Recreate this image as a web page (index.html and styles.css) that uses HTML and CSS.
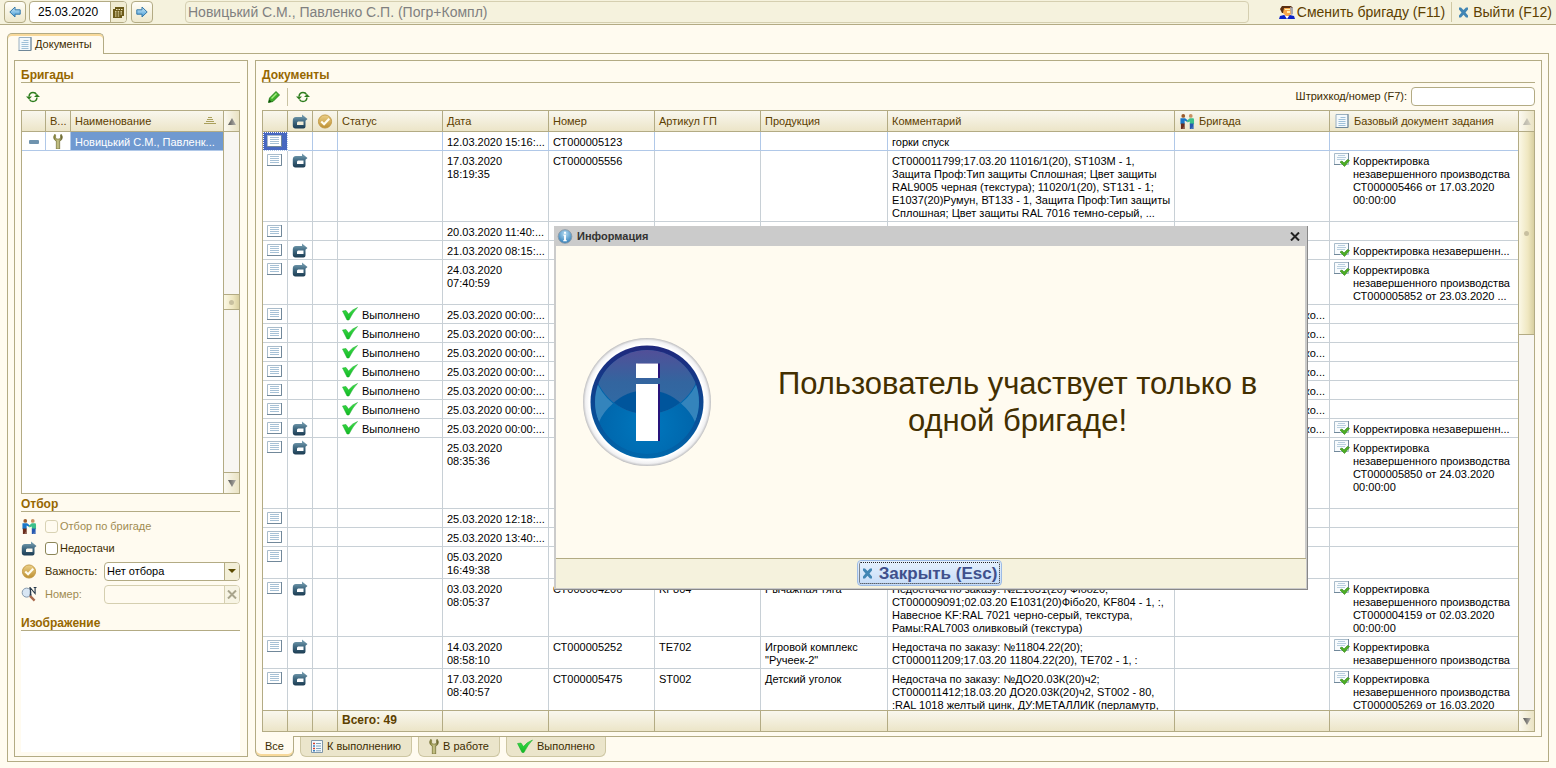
FILE: index.html
```html
<!DOCTYPE html>
<html lang="ru">
<head>
<meta charset="utf-8">
<title>Документы</title>
<link rel="stylesheet" href="styles.css">
</head>
<body>
<svg class="defs" aria-hidden="true">
  <defs>
    <linearGradient id="g-arrow" x1="0" y1="0" x2="0" y2="1"><stop offset="0" stop-color="#7fa6b8"/><stop offset=".5" stop-color="#416a82"/><stop offset="1" stop-color="#1c3c52"/></linearGradient>
    <linearGradient id="g-nav" x1="0" y1="0" x2="0" y2="1"><stop offset="0" stop-color="#d5eefa"/><stop offset="1" stop-color="#3f98d4"/></linearGradient>
    <linearGradient id="g-gold" x1="0" y1="0" x2="0" y2="1"><stop offset="0" stop-color="#ecd088"/><stop offset="1" stop-color="#bd8f30"/></linearGradient>
    <linearGradient id="g-green" x1="0" y1="0" x2="0" y2="1"><stop offset="0" stop-color="#3fe04a"/><stop offset="1" stop-color="#12b824"/></linearGradient>
    <linearGradient id="g-wrench" x1="0" y1="0" x2="1" y2="0"><stop offset="0" stop-color="#7c7a2c"/><stop offset=".5" stop-color="#c9c68a"/><stop offset="1" stop-color="#5b5820"/></linearGradient>
    <linearGradient id="g-tri" x1="0" y1="0" x2="1" y2="0"><stop offset="0" stop-color="#5a5a58"/><stop offset="1" stop-color="#b4b2ac"/></linearGradient>
    <radialGradient id="g-ball" cx=".5" cy=".3" r=".7"><stop offset="0" stop-color="#b6dcf2"/><stop offset="1" stop-color="#2f7db8"/></radialGradient>
    <linearGradient id="g-ring" x1="0" y1="0" x2="0" y2="1"><stop offset="0" stop-color="#20287c"/><stop offset=".5" stop-color="#0c4590"/><stop offset="1" stop-color="#0068ac"/></linearGradient>
    <radialGradient id="g-face" cx=".5" cy=".72" r=".6"><stop offset="0" stop-color="#0078be"/><stop offset="1" stop-color="#0060a6"/></radialGradient>
    <linearGradient id="g-gloss" gradientUnits="userSpaceOnUse" x1="0" y1="12" x2="0" y2="76"><stop offset="0" stop-color="#524f98"/><stop offset=".5" stop-color="#33659f"/><stop offset="1" stop-color="#2f6ca6"/></linearGradient>
    <radialGradient id="g-rim" cx=".5" cy=".5" r=".5"><stop offset=".9" stop-color="#fff"/><stop offset=".96" stop-color="#f0f0f2"/><stop offset="1" stop-color="#bebec0"/></radialGradient>
    <clipPath id="c-face"><circle cx="64" cy="64" r="52"/></clipPath>
    <clipPath id="c-top"><circle cx="64" cy="22" r="54"/></clipPath>
  </defs>
  <symbol id="i-doc" viewBox="0 0 15 12"><path d="M.5 .5h14v11H.5z" fill="#fff" stroke="#a9bccb"/><path d="M14.500 0v11.500H0" fill="none" stroke="#71889a"/><path d="M3 2.500h9M3 4.500h9M3 6.500h9M3 8.500h9" stroke="#a6c1d6"/></symbol>
  <symbol id="i-page" viewBox="0 0 13 14"><path d="M.5 .5h12v13H.5z" fill="#f4f9fc" stroke="#9ab0c0"/><path d="M12.500 0v13.500H0" fill="none" stroke="#6f8798"/><path d="M5 3.500h5M3 5.500h7M3 7.500h7M3 9.500h7M3 11.500h7" stroke="#9fc0d8"/></symbol>
  <symbol id="i-back" viewBox="0 0 16 15"><path fill-rule="evenodd" d="M10 .5L15.500 5 13.500 6.800V12.500Q13.500 14.500 11.500 14.500H3.500Q.8 14.500.8 11.500V6.500Q.8 3 4 3h6zM6 7.500h5.500v3.500H5V8.500z" fill="url(#g-arrow)"/></symbol>
  <symbol id="i-gold" viewBox="0 0 16 16"><circle cx="8" cy="8" r="7" fill="url(#g-gold)" stroke="#c29a45"/><path d="M4 8l3 3 5.500-6" fill="none" stroke="#fffdf0" stroke-width="2.300"/></symbol>
  <symbol id="i-check" viewBox="0 0 16 14"><path d="M.5 4l3.500-.5 2.500 3.500Q10 2.500 15.500 .5 11 5 7 13H5z" fill="url(#g-green)" stroke="#16a828" stroke-width=".5"/></symbol>
  <symbol id="i-wrench" viewBox="0 0 10 15"><path d="M1.500 .5Q0 3 1 5q.8 1.500 2.300 2v8h3.400V7Q8.500 6.400 9 5q1-2-.5-4.500L7.500 .8v3.400L6 5H4L2.600 4.200V.8z" fill="url(#g-wrench)" stroke="#6b682c" stroke-width=".6"/></symbol>
  <symbol id="i-refresh" viewBox="0 0 14 12"><path d="M3 5.500Q3.500 1.500 7 1.500q2.500 0 3.500 2M11 6.500q-.5 4-4 4-2.500 0-3.500-2" fill="none" stroke="#2e7d1e" stroke-width="1.500"/><path d="M0 5.500h6L3 8.500zM8 6h6l-3-3z" fill="#2e7d1e"/></symbol>
  <symbol id="i-pencil" viewBox="0 0 12 12"><path d="M.5 11.500l1-4.500L8 .5 11.500 4 5 10.500z" fill="#3fae2a" stroke="#1c7412" stroke-width=".8"/><path d="M.5 11.500l.8-3 2.300 2.200z" fill="#0f4f0a"/><path d="M3.500 7.500l5-5" stroke="#a6ee80" stroke-width="1.500"/></symbol>
  <symbol id="i-people" viewBox="0 0 16 16"><circle cx="4" cy="2" r="2" fill="#9a5a2c"/><circle cx="12" cy="2" r="2" fill="#c89060"/><path d="M1 4.500h5l3 2.500-.8 1.500L5.500 7v4H1z" fill="#1976c8"/><path d="M15 4.500h-4L8 7l.5 2L11 8v3h4.500V6z" fill="#3cc08a"/><path d="M1.500 10h4v6H4v-3l-.5 3h-2z" fill="#6a2c1c"/><path d="M11 10h4v6h-1.500v-3L13 16h-2z" fill="#2458b0"/></symbol>
  <symbol id="i-docok" viewBox="0 0 16 14"><path d="M.5 .5h14v11H.5z" fill="#f8fbfd" stroke="#a9bccb"/><path d="M14.500 0v7M0 11.500h6" stroke="#71889a"/><path d="M4 2.500h7M3 4.500h9M3 6.500h8" stroke="#b9cfdf"/><path d="M6 9l2-1 2 2 3.500-3.500 2 1L10.500 13.500z" fill="#4cae24" stroke="#2f8212" stroke-width=".6"/></symbol>
  <symbol id="i-x" viewBox="0 0 11 10"><path d="M1 0h2l2.500 2.600L8 0h2v2L7.500 5 10 8v2H8L5.500 7.300 3 10H1V8l2.500-3L1 2V0z" fill="#4286b4"/></symbol>
  <symbol id="i-nav" viewBox="0 0 12 12"><path d="M.8 6L6 1v2.800h5.200v4.400H6V11z" fill="url(#g-nav)" stroke="#3578a8"/></symbol>
  <symbol id="i-calc" viewBox="0 0 11 11"><path d="M2 0h9v9H9v2H0V2h2z" fill="#6b5a18"/><path d="M3 2h1.500v1H3zM5.500 2H7v1H5.500zM8 2h1.500v1H8zM2 4.200h1.500v1.200H2zM4.700 4.200h1.500v1.200H4.700zM7.500 4.200H9v1.200H7.500zM2 6.500h1.500v1H2zM4.700 6.500h1.500v1H4.700zM7.500 6.500H9v1H7.500zM2 8.600h1.500v1H2zM4.700 8.600h1.500v1H4.700z" fill="#f3e9bd"/></symbol>
  <symbol id="i-user" viewBox="0 0 16 13"><path d="M3 0h9l2 2v5H3L1 3z" fill="#5a2f10"/><path d="M5 2h7v6l-2 2H7L4 7z" fill="#f7a64a"/><path d="M6 3h5v1H6zM8 5h3v2H8z" fill="#fff0b0"/><path d="M11 1l3 1v6l-2 1z" fill="#a8a8b0"/><path d="M0 13l1-3 4-1 3 2 3-2 4 1 1 3z" fill="#0a22c8"/><path d="M6 10h4l-2 3z" fill="#fff"/></symbol>
  <symbol id="i-search" viewBox="0 0 16 16"><circle cx="5.500" cy="6" r="4.800" fill="#d8e6f4" stroke="#7f93a8"/><path d="M9 9.500l5 5" stroke="#a8694c" stroke-width="2.500"/><path d="M9.500 8V1l5 6V.5M8 1h2M13 .5h3M8.500 8.500h2.500" fill="none" stroke="#26384a" stroke-width="1.200"/></symbol>
  <symbol id="i-list" viewBox="0 0 12 13"><path d="M.5 .5h11v12H.5z" fill="#f4f9fc" stroke="#7f96a8"/><path d="M2 3.500h2M2 8.500h2" stroke="#d04030" stroke-width="1.500"/><path d="M2 6h2M2 10.800h2" stroke="#3a80c0" stroke-width="1.500"/><path d="M5 3.500h5M5 6h5M5 8.500h5M5 10.800h5" stroke="#7fa2bc"/></symbol>
  <symbol id="i-up" viewBox="0 0 8 7"><path d="M4 0l4 7H0z" fill="url(#g-tri)"/></symbol>
  <symbol id="i-down" viewBox="0 0 8 7"><path d="M4 7l4-7H0z" fill="url(#g-tri)"/></symbol>
  <symbol id="i-sort" viewBox="0 0 12 8"><path d="M4 .5h4M3 2.500h6M2 4.500h8M0 6.500h12" stroke="#aaa05c"/></symbol>
  <symbol id="i-close" viewBox="0 0 10 9"><path d="M1 .5l8 8M9 .5l-8 8" stroke="currentColor" stroke-width="2"/></symbol>
  <symbol id="i-info" viewBox="0 0 16 16"><circle cx="8" cy="8" r="7.300" fill="url(#g-ball)" stroke="#8b9aa8"/><path d="M7 3h2v2H7zM6 6h3v6h1v1H6v-1h1V7H6z" fill="#fff"/></symbol>
</svg>

<header class="topbar">
  <button class="nav-btn" type="button" aria-label="Назад"><svg class="s12"><use href="#i-nav"/></svg></button>
  <div class="date-box">
    <input type="text" value="25.03.2020" aria-label="Дата">
    <button type="button" aria-label="Календарь"><svg class="s11"><use href="#i-calc"/></svg></button>
  </div>
  <button class="nav-btn" type="button" aria-label="Вперед"><svg class="s12 flip"><use href="#i-nav"/></svg></button>
  <input class="team-input" type="text" value="Новицький С.М., Павленко С.П. (Погр+Компл)" aria-label="Бригада" disabled>
  <button class="link-btn" type="button"><svg class="s16"><use href="#i-user"/></svg>Сменить бригаду (F11)</button>
  <span class="sep"></span>
  <button class="link-btn exit" type="button"><svg class="s11"><use href="#i-x"/></svg>Выйти (F12)</button>
</header>

<main class="main">
  <div class="tabs"><button class="tab" type="button"><svg class="s14"><use href="#i-page"/></svg>Документы</button></div>
  <div class="workspace">
    <aside class="side">
      <h2>Бригады</h2>
      <div class="tools"><button class="tool" type="button" aria-label="Обновить"><svg class="s14"><use href="#i-refresh"/></svg></button></div>
      <div class="grid-box teams">
        <div class="scroll-area">
          <table>
            <colgroup><col class="c24"><col class="c25"><col></colgroup>
            <thead><tr><th></th><th>В...</th><th><span class="sorted">Наименование<svg class="s12"><use href="#i-sort"/></svg></span></th></tr></thead>
            <tbody><tr class="cur"><td class="ic"><span class="dash"></span></td><td class="ic"><svg class="s15"><use href="#i-wrench"/></svg></td><td class="picked">Новицький С.М., Павленк...</td></tr></tbody>
          </table>
        </div>
        <div class="scrollbar"><span class="sb-btn"><svg class="s8"><use href="#i-up"/></svg></span><span class="track"></span><span class="thumb small"></span><span class="track"></span><span class="sb-btn"><svg class="s8"><use href="#i-down"/></svg></span></div>
      </div>
      <h2 class="h-filter">Отбор</h2>
      <div class="filters">
        <svg class="s16"><use href="#i-people"/></svg><label class="check off"><input type="checkbox" disabled>Отбор по бригаде</label>
        <svg class="s16"><use href="#i-back"/></svg><label class="check"><input type="checkbox">Недостачи</label>
        <svg class="s16"><use href="#i-gold"/></svg><label for="imp">Важность:</label>
        <div class="field"><select id="imp"><option>Нет отбора</option></select><span class="drop"></span></div>
        <svg class="s16"><use href="#i-search"/></svg><label class="off" for="num">Номер:</label>
        <div class="field off"><input id="num" type="text" disabled><button type="button" aria-label="Очистить" disabled><svg class="s10"><use href="#i-close"/></svg></button></div>
      </div>
      <h2 class="h-image">Изображение</h2>
      <div class="image-box"></div>
    </aside>

    <section class="docs-col">
      <div class="docs">
        <h2>Документы</h2>
        <div class="tools">
          <button class="tool" type="button" aria-label="Изменить"><svg class="s12"><use href="#i-pencil"/></svg></button>
          <span class="tool-sep"></span>
          <button class="tool" type="button" aria-label="Обновить"><svg class="s14"><use href="#i-refresh"/></svg></button>
          <label class="barcode">Штрихкод/номер (F7):<input type="text"></label>
        </div>
        <div class="grid-box list">
          <div class="scroll-area">
            <table>
              <colgroup><col class="c25"><col class="c25"><col class="c25"><col class="c105"><col class="c106"><col class="c106"><col class="c106"><col class="c127"><col><col class="c155"><col class="c188"></colgroup>
              <thead><tr><th></th><th class="ic"><svg class="s16"><use href="#i-back"/></svg></th><th class="ic"><svg class="s16"><use href="#i-gold"/></svg></th><th>Статус</th><th>Дата</th><th>Номер</th><th>Артикул ГП</th><th>Продукция</th><th>Комментарий</th><th><span class="icl"><svg class="s16"><use href="#i-people"/></svg>Бригада</span></th><th><span class="icl page"><svg class="s14"><use href="#i-page"/></svg>Базовый документ задания</span></th></tr></thead>
              <tbody>
                <tr class="cur"><td class="ic focus"><svg class="doc"><use href="#i-doc"/></svg></td><td></td><td></td><td></td><td>12.03.2020 15:16:...</td><td>СТ000005123</td><td></td><td></td><td>горки спуск</td><td></td><td></td></tr>
                <tr><td class="ic"><svg class="doc"><use href="#i-doc"/></svg></td><td class="ic"><svg class="s16"><use href="#i-back"/></svg></td><td></td><td></td><td>17.03.2020<br>18:19:35</td><td>СТ000005556</td><td></td><td></td><td>СТ000011799;17.03.20 11016/1(20), ST103M - 1,<br>Защита Проф:Тип защиты Сплошная; Цвет защиты<br>RAL9005 черная (текстура); 11020/1(20), ST131 - 1;<br>Е1037(20)Румун, ВТ133 - 1, Защита Проф:Тип защиты<br>Сплошная; Цвет защиты RAL 7016 темно-серый, ...</td><td></td><td><div class="base"><svg class="s16"><use href="#i-docok"/></svg><span>Корректировка<br>незавершенного производства<br>СТ000005466 от 17.03.2020<br>00:00:00</span></div></td></tr>
                <tr><td class="ic"><svg class="doc"><use href="#i-doc"/></svg></td><td></td><td></td><td></td><td>20.03.2020 11:40:...</td><td></td><td></td><td></td><td></td><td></td><td></td></tr>
                <tr><td class="ic"><svg class="doc"><use href="#i-doc"/></svg></td><td class="ic"><svg class="s16"><use href="#i-back"/></svg></td><td></td><td></td><td>21.03.2020 08:15:...</td><td></td><td></td><td></td><td></td><td></td><td><div class="base"><svg class="s16"><use href="#i-docok"/></svg><span>Корректировка незавершенн...</span></div></td></tr>
                <tr class="rows3"><td class="ic"><svg class="doc"><use href="#i-doc"/></svg></td><td class="ic"><svg class="s16"><use href="#i-back"/></svg></td><td></td><td></td><td>24.03.2020<br>07:40:59</td><td></td><td></td><td></td><td></td><td></td><td><div class="base"><svg class="s16"><use href="#i-docok"/></svg><span>Корректировка<br>незавершенного производства<br>СТ000005852 от 23.03.2020 ...</span></div></td></tr>
                <tr><td class="ic"><svg class="doc"><use href="#i-doc"/></svg></td><td></td><td></td><td><span class="done"><svg class="s16"><use href="#i-check"/></svg>Выполнено</span></td><td>25.03.2020 00:00:...</td><td></td><td></td><td></td><td></td><td class="team">Новицький С.М., Павленко...</td><td></td></tr>
                <tr><td class="ic"><svg class="doc"><use href="#i-doc"/></svg></td><td></td><td></td><td><span class="done"><svg class="s16"><use href="#i-check"/></svg>Выполнено</span></td><td>25.03.2020 00:00:...</td><td></td><td></td><td></td><td></td><td class="team">Новицький С.М., Павленко...</td><td></td></tr>
                <tr><td class="ic"><svg class="doc"><use href="#i-doc"/></svg></td><td></td><td></td><td><span class="done"><svg class="s16"><use href="#i-check"/></svg>Выполнено</span></td><td>25.03.2020 00:00:...</td><td></td><td></td><td></td><td></td><td class="team">Новицький С.М., Павленко...</td><td></td></tr>
                <tr><td class="ic"><svg class="doc"><use href="#i-doc"/></svg></td><td></td><td></td><td><span class="done"><svg class="s16"><use href="#i-check"/></svg>Выполнено</span></td><td>25.03.2020 00:00:...</td><td></td><td></td><td></td><td></td><td class="team">Новицький С.М., Павленко...</td><td></td></tr>
                <tr><td class="ic"><svg class="doc"><use href="#i-doc"/></svg></td><td></td><td></td><td><span class="done"><svg class="s16"><use href="#i-check"/></svg>Выполнено</span></td><td>25.03.2020 00:00:...</td><td></td><td></td><td></td><td></td><td class="team">Новицький С.М., Павленко...</td><td></td></tr>
                <tr><td class="ic"><svg class="doc"><use href="#i-doc"/></svg></td><td></td><td></td><td><span class="done"><svg class="s16"><use href="#i-check"/></svg>Выполнено</span></td><td>25.03.2020 00:00:...</td><td></td><td></td><td></td><td></td><td class="team">Новицький С.М., Павленко...</td><td></td></tr>
                <tr><td class="ic"><svg class="doc"><use href="#i-doc"/></svg></td><td class="ic"><svg class="s16"><use href="#i-back"/></svg></td><td></td><td><span class="done"><svg class="s16"><use href="#i-check"/></svg>Выполнено</span></td><td>25.03.2020 00:00:...</td><td></td><td></td><td></td><td></td><td class="team">Новицький С.М., Павленко...</td><td><div class="base"><svg class="s16"><use href="#i-docok"/></svg><span>Корректировка незавершенн...</span></div></td></tr>
                <tr class="rows5"><td class="ic"><svg class="doc"><use href="#i-doc"/></svg></td><td class="ic"><svg class="s16"><use href="#i-back"/></svg></td><td></td><td></td><td>25.03.2020<br>08:35:36</td><td></td><td></td><td></td><td></td><td></td><td><div class="base"><svg class="s16"><use href="#i-docok"/></svg><span>Корректировка<br>незавершенного производства<br>СТ000005850 от 24.03.2020<br>00:00:00</span></div></td></tr>
                <tr><td class="ic"><svg class="doc"><use href="#i-doc"/></svg></td><td></td><td></td><td></td><td>25.03.2020 12:18:...</td><td></td><td></td><td></td><td></td><td></td><td></td></tr>
                <tr><td class="ic"><svg class="doc"><use href="#i-doc"/></svg></td><td></td><td></td><td></td><td>25.03.2020 13:40:...</td><td></td><td></td><td></td><td></td><td></td><td></td></tr>
                <tr><td class="ic"><svg class="doc"><use href="#i-doc"/></svg></td><td></td><td></td><td></td><td>05.03.2020<br>16:49:38</td><td></td><td></td><td></td><td></td><td></td><td></td></tr>
                <tr><td class="ic"><svg class="doc"><use href="#i-doc"/></svg></td><td class="ic"><svg class="s16"><use href="#i-back"/></svg></td><td></td><td></td><td>03.03.2020<br>08:05:37</td><td>СТ000004206</td><td>KF804</td><td>Рычажная тяга</td><td>Недостача по заказу: №Е1031(20) Фібо20;<br>СТ000009091;02.03.20 Е1031(20)Фібо20, KF804 - 1, :,<br>Навесное KF:RAL 7021 черно-серый, текстура,<br>Рамы:RAL7003 оливковый (текстура)</td><td></td><td><div class="base"><svg class="s16"><use href="#i-docok"/></svg><span>Корректировка<br>незавершенного производства<br>СТ000004159 от 02.03.2020<br>00:00:00</span></div></td></tr>
                <tr><td class="ic"><svg class="doc"><use href="#i-doc"/></svg></td><td class="ic"><svg class="s16"><use href="#i-back"/></svg></td><td></td><td></td><td>14.03.2020<br>08:58:10</td><td>СТ000005252</td><td>ТЕ702</td><td>Игровой комплекс<br>"Ручеек-2"</td><td>Недостача по заказу: №11804.22(20);<br>СТ000011209;17.03.20 11804.22(20), ТЕ702 - 1, :</td><td></td><td><div class="base"><svg class="s16"><use href="#i-docok"/></svg><span>Корректировка<br>незавершенного производства</span></div></td></tr>
                <tr><td class="ic"><svg class="doc"><use href="#i-doc"/></svg></td><td class="ic"><svg class="s16"><use href="#i-back"/></svg></td><td></td><td></td><td>17.03.2020<br>08:40:57</td><td>СТ000005475</td><td>ST002</td><td>Детский уголок</td><td>Недостача по заказу: №ДО20.03К(20)ч2;<br>СТ000011412;18.03.20 ДО20.03К(20)ч2, ST002 - 80,<br>:RAL 1018 желтый цинк, ДУ:МЕТАЛЛИК (перламутр,</td><td></td><td><div class="base"><svg class="s16"><use href="#i-docok"/></svg><span>Корректировка<br>незавершенного производства<br>СТ000005269 от 16.03.2020</span></div></td></tr>
              </tbody>
              <tfoot><tr><td></td><td></td><td></td><td>Всего: 49</td><td></td><td></td><td></td><td></td><td></td><td></td><td></td></tr></tfoot>
            </table>
          </div>
          <div class="scrollbar"><span class="sb-btn dim"><svg class="s8"><use href="#i-up"/></svg></span><span class="thumb"></span><span class="track long"></span><span class="sb-btn"><svg class="s8"><use href="#i-down"/></svg></span></div>
        </div>
      </div>
      <div class="bottom-tabs">
        <button class="btab active" type="button">Все</button>
        <button class="btab" type="button"><svg class="s13"><use href="#i-list"/></svg>К выполнению</button>
        <button class="btab" type="button"><svg class="s15"><use href="#i-wrench"/></svg>В работе</button>
        <button class="btab" type="button"><svg class="s16"><use href="#i-check"/></svg>Выполнено</button>
      </div>
    </section>
  </div>
</main>

<div class="dialog" role="dialog" aria-labelledby="dlg-title">
  <div class="dlg-head"><svg class="s16"><use href="#i-info"/></svg><span id="dlg-title">Информация</span><button type="button" aria-label="Закрыть окно"><svg class="s10"><use href="#i-close"/></svg></button></div>
  <div class="dlg-body">
    <svg class="big-info" viewBox="0 0 128 128" aria-hidden="true">
      <circle cx="64" cy="64" r="64" fill="url(#g-rim)"/>
      <circle cx="64" cy="64" r="56.500" fill="url(#g-ring)"/>
      <g clip-path="url(#c-face)">
        <circle cx="64" cy="64" r="52" fill="url(#g-face)"/>
        <path d="M12 40Q18 56 30 65.500 20 74 16 84L8 64zM116 40q-6 16-18 25.500Q108 74 112 84l8-20z" fill="#3484bc"/>
        <circle cx="64" cy="22" r="54" fill="url(#g-gloss)"/>
        <circle cx="64" cy="102" r="50" fill="#00559c" clip-path="url(#c-top)"/>
      </g>
      <path d="M55 25.500h22V40H55zM55 46h22v57H55z" fill="#28147a"/>
      <path d="M53 25.500h22V40H53zM53 46h22v57H53z" fill="#fff"/>
    </svg>
    <p>Пользователь участвует только в<br>одной бригаде!</p>
  </div>
  <div class="dlg-foot"><button type="button"><svg class="s11"><use href="#i-x"/></svg>Закрыть (Esc)</button></div>
</div>
</body>
</html>
```
FILE: styles.css
```css
:root {
  --paper: #fffbf0;
  --line: #b3ab84;
  --brown: #5c4000;
  --head: linear-gradient(#f9f7ee, #ece5c8);
}
* { box-sizing: border-box; }
body {
  margin: 0;
  height: 100vh;
  display: flex;
  flex-direction: column;
  background: var(--paper);
  color: #3c2c00;
  font: 11px/13px "Liberation Sans", Arial, sans-serif;
  overflow: hidden;
  position: relative;
}
button, input, select { font: inherit; color: inherit; margin: 0; padding: 0; border: 0; background: none; outline: 0; }
svg { display: block; flex: none; }
.defs { position: absolute; width: 0; height: 0; }
.s8 { width: 8px; height: 7px; }
.s10 { width: 10px; height: 9px; }
.s11 { width: 11px; height: 11px; }
.s12 { width: 12px; height: 12px; }
.s13 { width: 12px; height: 13px; }
.s14 { width: 14px; height: 14px; }
.s15 { width: 10px; height: 15px; }
.s16 { width: 16px; height: 15px; }
.doc { width: 15px; height: 12px; }
.flip { transform: scaleX(-1); }

/* top bar */
.topbar {
  flex: none;
  display: flex;
  align-items: center;
  height: 25px;
  padding: 0 4px;
  background: #f5f2dd;
  border-bottom: 1px solid var(--line);
  font-size: 14px;
}
.nav-btn {
  width: 22px;
  height: 22px;
  display: grid;
  place-items: center;
  border: 1px solid var(--line);
  border-radius: 4px;
  background: linear-gradient(#fffef8, #eee8cc);
}
.date-box {
  display: flex;
  width: 98px;
  height: 22px;
  margin: 0 4px 0 3px;
  border: 1px solid var(--line);
  border-radius: 4px;
  background: #fff;
  overflow: hidden;
}
.date-box input { flex: 1; min-width: 0; padding-left: 8px; font-size: 12px; color: #000; }
.date-box button { width: 16px; display: grid; place-items: center; border-left: 1px solid var(--line); background: #f1ecd2; }
.team-input {
  flex: 1;
  min-width: 0;
  height: 22px;
  margin: 0 30px 0 32px;
  padding: 0 2px;
  border: 1px solid #d5cfb0;
  border-radius: 4px;
  color: #808080;
}
.link-btn { display: flex; align-items: center; gap: 2px; white-space: nowrap; color: var(--brown); }
.exit { gap: 4px; }
.sep { width: 1px; height: 20px; margin: 0 6px; background: #cfc8a4; }

/* main frame */
.main { flex: 1; min-height: 0; display: flex; flex-direction: column; padding: 8px 7px 6px; }
.tabs { display: flex; z-index: 1; }
.tab {
  display: flex;
  align-items: center;
  gap: 3px;
  height: 21px;
  margin-bottom: -1px;
  padding: 0 11px 0 10px;
  border: 1px solid var(--line);
  border-bottom: 0;
  border-radius: 5px 5px 0 0;
  background: var(--paper);
  box-shadow: inset 0 2px #f8d99a;
}
.workspace { flex: 1; min-height: 0; display: flex; gap: 7px; padding: 6px 6px 4px; border: 1px solid var(--line); }
h2 {
  margin: 0;
  height: 15px;
  border-bottom: 1px solid var(--line);
  color: #966700;
  font-size: 12px;
  line-height: 14px;
  font-weight: bold;
}
.side { flex: none; width: 234px; display: flex; flex-direction: column; padding: 7px 7px 4px 6px; border: 1px solid var(--line); }
.docs-col { flex: 1; min-width: 0; display: flex; flex-direction: column; }
.docs { flex: 1; min-height: 0; display: flex; flex-direction: column; padding: 7px 6px 4px; border: 1px solid var(--line); }
.tools { display: flex; align-items: center; height: 27px; padding-left: 4px; }
.tool { width: 16px; height: 20px; display: grid; place-items: center; }
.tool-sep { width: 1px; height: 18px; margin: 0 7px 0 5px; background: #c9c3a4; }
.barcode { display: flex; align-items: center; gap: 4px; margin-left: auto; }
.barcode input { width: 124px; height: 19px; border: 1px solid var(--line); border-radius: 4px; background: #fff; }

/* grids */
.grid-box { display: flex; min-height: 0; border: 1px solid var(--line); background: #fff; }
.teams { flex: 1; }
.list { flex: 1; }
.scroll-area { flex: 1; min-width: 0; overflow: hidden; }
table { width: 100%; table-layout: fixed; border-collapse: separate; border-spacing: 0; color: #000; }
.c24 { width: 24px; }
.c25 { width: 25px; }
.c105 { width: 105px; }
.c106 { width: 106px; }
.c127 { width: 127px; }
.c155 { width: 155px; }
.c188 { width: 188px; }
th {
  position: sticky;
  top: 0;
  height: 21px;
  padding: 0 4px;
  text-align: left;
  font-weight: normal;
  color: var(--brown);
  background: var(--head);
  border-right: 1px solid var(--line);
  border-bottom: 1px solid var(--line);
  white-space: nowrap;
  overflow: hidden;
}
td {
  padding: 4px 1px 1px 4px;
  height: 19px;
  vertical-align: top;
  border-right: 1px solid #c8d0d6;
  border-bottom: 1px solid #c8d0d6;
  white-space: nowrap;
  overflow: hidden;
}
tr > :last-child { border-right: 0; }
.cur td { border-color: #b0c8e8; }
th.ic { padding: 1px 4px; }
td.ic { padding: 2px 4px 0; }
td.ic .doc { margin-top: 1px; }
th.ic svg { margin: 0 auto; }
.rows3 td { height: 45px; }
.rows5 td { height: 71px; }
.focus { background: #4768c0; outline: 1px dotted #fff; outline-offset: -1px; }
.picked { background: #7099d0; color: #fff; }
.dash { display: block; width: 10px; height: 4px; margin: 6px auto 0; border-radius: 1px; background: #6f93ae; }
.teams .ic svg { margin: 0 auto; }
.team { text-align: right; padding-right: 4px; }
.icl { display: flex; align-items: center; gap: 4px; }
.icl.page { gap: 5px; padding-left: 1px; }
.sorted { display: flex; align-items: center; justify-content: space-between; padding-right: 3px; }
.base { display: flex; gap: 3px; }
.base span { min-width: 0; }
.base svg, .done svg { height: 14px; margin: -2px 0 0; }
.base svg { margin-bottom: -1px; }
.done { display: flex; gap: 4px; height: 13px; }
tfoot td {
  position: sticky;
  bottom: 0;
  height: 21px;
  padding: 3px 4px;
  background: var(--head);
  border-top: 1px solid var(--line);
  border-bottom: 0;
  border-right-color: var(--line);
  color: var(--brown);
  font-size: 12px;
  font-weight: bold;
}
.scrollbar { flex: none; width: 16px; display: flex; flex-direction: column; border-left: 1px solid var(--line); background: #f8f6f2; }
.sb-btn { height: 20px; display: grid; place-items: center; background: linear-gradient(90deg, #fbf9f0, #eae3c4); }
.sb-btn.dim svg { opacity: .4; }
.track { flex: 1; border-top: 1px solid var(--line); border-bottom: 1px solid var(--line); }
.track.long { flex: 375; }
.thumb { flex: 202; display: grid; place-items: center; border-top: 1px solid var(--line); background: linear-gradient(90deg, #fbf8e6, #efe7c0 60%, #d8cfa0); }
.thumb.small { flex: none; height: 14px; border: 0; }
.thumb::after { content: ""; width: 5px; height: 5px; border-radius: 50%; background: #c8c0a0; }

/* filters */
.h-filter { margin-top: 3px; }
.filters {
  display: grid;
  grid-template-columns: 24px 59px 1fr;
  grid-template-rows: 22px 22px 24px 22px;
  align-items: center;
  padding-top: 3px;
}
.check { grid-column: 2 / 4; display: flex; align-items: center; gap: 2px; }
.check input {
  appearance: none;
  width: 13px;
  height: 13px;
  border: 1px solid #8c8658;
  border-radius: 3px;
  background: #fff;
}
.off { color: #a08b50; }
.check.off input { border-color: #d8d2b4; background: var(--paper); }
.field { display: flex; height: 19px; border: 1px solid var(--line); border-radius: 4px; background: #fff; overflow: hidden; position: relative; }
.field select { appearance: none; flex: 1; padding: 0 2px; color: #000; }
.drop { position: absolute; right: 0; top: 0; width: 15px; height: 17px; display: grid; place-items: center; border-left: 1px solid var(--line); background: #f3efd8; pointer-events: none; }
.drop::after { content: ""; border: 4px solid transparent; border-top-color: #5a4a00; border-bottom: 0; }
.field input { flex: 1; min-width: 0; }
.field button { width: 15px; display: grid; place-items: center; border-left: 1px solid #d5cfb0; background: #f7f4e4; color: #a8a48c; }
.field.off { border-color: #d5cfb0; background: var(--paper); }
.h-image { margin-top: 11px; }
.image-box { flex: none; height: 121px; background: #fff; }

/* bottom tabs */
.bottom-tabs { display: flex; gap: 6px; height: 20px; }
.btab {
  display: flex;
  align-items: center;
  gap: 4px;
  height: 20px;
  padding: 0 10px;
  border: 1px solid #cdc6a2;
  border-top: 0;
  border-radius: 0 0 6px 6px;
  background: #ebe5cb;
}
.btab.active { height: 21px; margin-top: -1px; padding: 0 9px; border-color: var(--line); background: var(--paper); box-shadow: inset 0 -2px #f8d99a; }

/* message window */
.dialog {
  position: absolute;
  left: 554px;
  top: 226px;
  width: 754px;
  height: 364px;
  display: flex;
  flex-direction: column;
  border: 2px solid #cbcbcb;
  border-top: 0;
  box-shadow: inset -1px -1px #cbcbcb;
  background: var(--paper);
}
.dialog::after { content: ""; position: absolute; inset: 0 -2px -2px -2px; border-right: 1px solid #888; border-bottom: 1px solid #888; pointer-events: none; }
.dlg-head { display: flex; align-items: center; gap: 4px; height: 20px; padding: 0 4px 0 1px; background: #cbcbcb; color: #333; font-weight: bold; }
.dlg-head button { margin-left: auto; padding: 4px 2px; color: #222; }
.dlg-body { flex: 1; display: flex; align-items: center; padding-left: 27px; }
.big-info { width: 128px; height: 128px; }
.dlg-body p { flex: 1; margin: 0 0 0 18px; text-align: center; font-size: 31px; line-height: 37px; color: #432f00; }
.dlg-foot { display: flex; justify-content: center; height: 30px; padding: 1px 0 0; border-top: 1px solid var(--line); background: #f5f2dd; }
.dlg-foot button {
  display: flex;
  align-items: center;
  gap: 6px;
  height: 26px;
  margin-right: 3px;
  padding: 0 4px;
  border: 1px solid #9dbce6;
  border-radius: 4px;
  background: linear-gradient(#e6f1fd, #c6dcf8);
  outline: 1px dotted #222;
  outline-offset: -3px;
  color: #40508c;
  font-size: 17px;
  font-weight: bold;
}
```
